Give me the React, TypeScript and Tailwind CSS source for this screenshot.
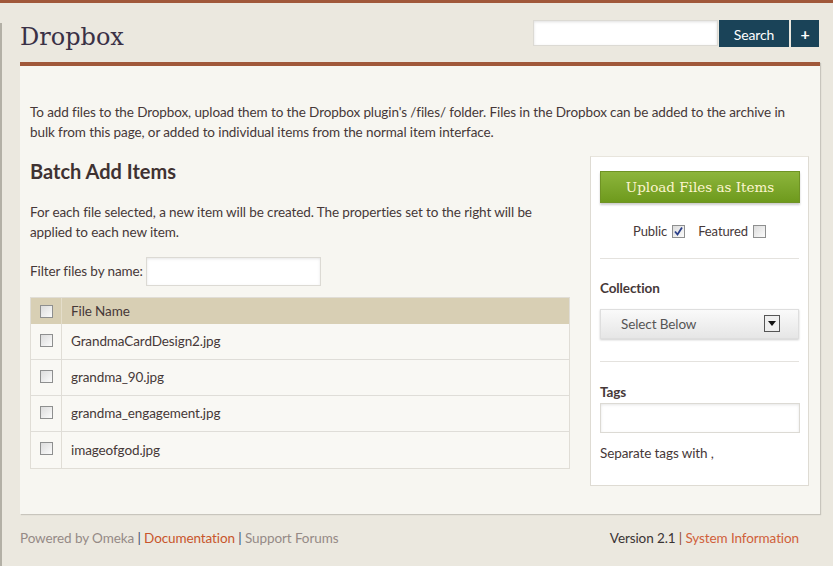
import React from "react";

const Box = ({ checked = false }: { checked?: boolean }) => (
  <span className="relative inline-block h-[13px] w-[13px] border border-[#8e8f8f] bg-gradient-to-br from-[#dcdcdc] to-[#fbfbfb]">
    {checked && (
      <svg viewBox="0 0 13 13" className="absolute left-[-1px] top-[-1px] h-[13px] w-[13px]">
        <path d="M3 6.5 L5.5 9.5 L10 2.5" fill="none" stroke="#2b3f8a" strokeWidth="1.8" />
      </svg>
    )}
  </span>
);

const files = [
  "GrandmaCardDesign2.jpg",
  "grandma_90.jpg",
  "grandma_engagement.jpg",
  "imageofgod.jpg",
];

export default function App() {
  return (
    <div
      className="relative h-[566px] w-[833px] overflow-hidden border-t-[3px] border-[#a0583a] bg-[#ebe8df] text-[13.5px] tracking-[-0.1px] text-[#463838]"
      style={{ fontFamily: "Lato, 'Open Sans', sans-serif" }}
    >
      <div className="absolute bottom-0 left-0 top-[20px] w-[2px] bg-[#b3b0a6]" />

      {/* header */}
      <div className="flex h-[59px] items-start justify-between pl-[20px] pr-[14px]">
        <h1
          className="mt-[17px] text-[24px] leading-[34px] tracking-normal text-[#3a3146]"
          style={{ fontFamily: "'DejaVu Serif', serif" }}
        >
          Dropbox
        </h1>
        <div className="mt-[17px] flex">
          <input className="h-[26px] w-[185px] border border-[#dcdad4] bg-white shadow-[inset_0_1px_3px_rgba(0,0,0,0.12)] outline-none" />
          <button className="ml-[1px] h-[27px] w-[70px] bg-[#1a4358] pt-[1px] text-[14px] text-white">Search</button>
          <button className="ml-[2px] flex h-[27px] w-[28px] items-center justify-center bg-[#1a4358] text-[16px] font-bold text-white">
            +
          </button>
        </div>
      </div>

      {/* main panel */}
      <div className="mx-[20px] h-[452px] w-[800px] border-t-4 border-[#a0583a] bg-[#f7f6f1] shadow-[1px_1px_1px_rgba(0,0,0,0.15)]">
        <p className="pl-[10px] pr-[12px] pt-[36px] leading-[20px]">
          To add files to the Dropbox, upload them to the Dropbox plugin's /files/ folder. Files in the Dropbox can be added to the archive in bulk from this page, or added to individual items from the normal item interface.
        </p>

        <div className="mt-[16px] flex pl-[10px]">
          {/* left column */}
          <div className="w-[540px]">
            <h2 className="text-[20px] font-bold leading-[26px] tracking-normal text-[#3f3232]">Batch Add Items</h2>
            <p className="mt-[18px] pr-[20px] leading-[20px]">
              For each file selected, a new item will be created. The properties set to the right will be applied to each new item.
            </p>
            <div className="mt-[15px] flex items-center">
              <span>Filter files by name:</span>
              <input className="ml-[3px] h-[29px] w-[175px] border border-[#dcdad4] bg-white shadow-[inset_0_1px_3px_rgba(0,0,0,0.1)] outline-none" />
            </div>
            <div className="mt-[11px] border border-[#e0ddd6]">
              <div className="flex h-[26px] items-center bg-[#d8cfb4]">
                <div className="flex h-full w-[31px] items-center justify-center border-r border-[#e4ddca]">
                  <Box />
                </div>
                <span className="pl-[9px]">File Name</span>
              </div>
              {files.map((f, i) => (
                <div
                  key={f}
                  className={`flex h-[36px] items-center bg-[#f9f8f4] ${i < files.length - 1 ? "border-b border-[#dfddd8]" : ""}`}
                >
                  <div className="flex h-full w-[31px] items-start justify-center border-r border-[#e0ddd6] pt-[10px]">
                    <Box />
                  </div>
                  <span className="pl-[9px]">{f}</span>
                </div>
              ))}
            </div>
          </div>

          {/* right panel */}
          <div className="ml-[20px] mt-[-2px] h-[330px] w-[219px] border border-[#dedbd3] border-t-[#e8e5dd] bg-white px-[9px] pt-[14px]">
            <button
              className="h-[32px] w-[200px] border border-[#6f9324] bg-gradient-to-b from-[#8db53b] to-[#6e9a1c] text-[13.5px] tracking-normal text-[#fdf5cf] shadow-[0_2px_2px_rgba(0,0,0,0.2)]"
              style={{ fontFamily: "'DejaVu Serif', serif" }}
            >
              Upload Files as Items
            </button>
            <div className="mt-[19px] flex items-center justify-center gap-[5px] text-[13px]">
              <span>Public</span>
              <Box checked />
              <span className="ml-[8px]">Featured</span>
              <Box />
            </div>
            <div className="mt-[16px] border-t border-[#e4e2de]" />
            <div className="mt-[19px] font-bold">Collection</div>
            <div className="mt-[11px] flex h-[30px] items-center justify-between border border-[#dedede] bg-gradient-to-b from-[#fafafa] to-[#e6e6e6] pl-[20px] pr-[18px] text-[#555] shadow-[0_1px_2px_rgba(0,0,0,0.2)]">
              <span>Select Below</span>
              <span className="flex h-[17px] w-[16px] items-center justify-center border border-[#555] bg-[#eee]">
                <svg viewBox="0 0 8 5" className="h-[5px] w-[8px]">
                  <path d="M0 0 H8 L4 5 Z" fill="#111" />
                </svg>
              </span>
            </div>
            <div className="mt-[22px] border-t border-[#e4e2de]" />
            <div className="mt-[20px] font-bold">Tags</div>
            <input className="mt-[1px] h-[30px] w-[200px] border border-[#dcdad4] bg-white shadow-[inset_0_1px_3px_rgba(0,0,0,0.1)] outline-none" />
            <div className="mt-[10px]">Separate tags with ,</div>
          </div>
        </div>
      </div>

      {/* footer */}
      <div className="mt-[14px] flex justify-between pl-[20px] pr-[34px]">
        <div>
          <span className="text-[#958a86]">Powered by Omeka</span>
          <span className="text-[#3c4870]"> | </span>
          <span className="text-[#c8552b]">Documentation</span>
          <span className="text-[#3c4870]"> | </span>
          <span className="text-[#958a86]">Support Forums</span>
        </div>
        <div>
          <span className="text-[#3a3434]">Version 2.1</span>
          <span className="text-[#8a4a2a]"> | </span>
          <span className="text-[#d0603a]">System Information</span>
        </div>
      </div>
    </div>
  );
}
